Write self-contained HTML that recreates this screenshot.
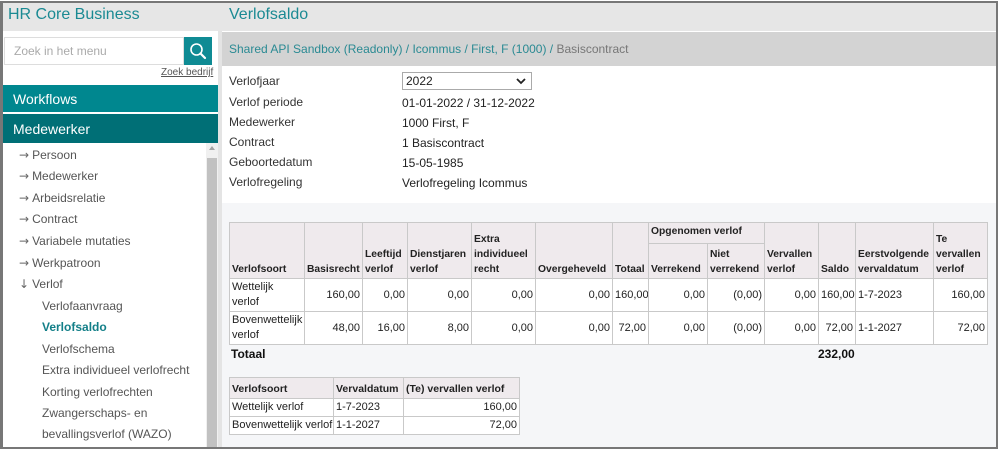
<!DOCTYPE html>
<html><head><meta charset="utf-8"><style>
*{box-sizing:border-box;margin:0;padding:0}
body{width:999px;height:451px;overflow:hidden;background:#fff;font-family:"Liberation Sans",sans-serif;font-size:12px;color:#333;position:relative}
.a{position:absolute;white-space:nowrap}
#frame{position:absolute;left:0;top:1px;width:998px;height:448px;border:2px solid #777;border-left-width:3px}
.mi{position:absolute;left:19px;color:#555;font-size:12px}
.mi span{color:#666;margin-right:3px;font-family:"DejaVu Sans",sans-serif;font-size:12px}
.si{position:absolute;left:42px;color:#555;font-size:12px}
table{border-collapse:collapse;position:absolute;font-size:11px;color:#222;background:#fff;table-layout:fixed}
td,th{border:1px solid #c9c9c9;padding:1px 2px;line-height:15px;overflow:hidden}
th{background:#efeaed;text-align:left;vertical-align:bottom;font-weight:bold;font-size:10.5px}
.t1 th{font-size:10.3px}
td.r{text-align:right;vertical-align:middle}
.nw td,.nw th{white-space:nowrap}
.lbl{position:absolute;left:229px;color:#333}
.val{position:absolute;left:402px;color:#222}
</style></head><body>
<div class="a" style="left:3px;top:3px;width:993px;height:28px;background:#e6e6e6"></div>
<div class="a" style="left:8px;top:6px;font-size:16px;color:#1b8a93">HR Core Business</div>
<div class="a" style="left:229px;top:6px;font-size:16px;color:#1b8a93">Verlofsaldo</div>
<div class="a" style="left:3px;top:31px;width:215px;height:417px;background:#fff"></div>
<div class="a" style="left:4px;top:37px;width:180px;height:28px;border:1px solid #ddd;background:#fff"></div>
<div class="a" style="left:14px;top:44px;color:#aaa;font-size:12px">Zoek in het menu</div>
<div class="a" style="left:184px;top:37px;width:28px;height:28px;background:#0f8b94"></div>
<svg class="a" style="left:188px;top:41px" width="20" height="20" viewBox="0 0 20 20"><circle cx="8.5" cy="8.5" r="5.5" fill="none" stroke="#fff" stroke-width="1.6"/><path d="M12.5 12.5 L17 17" stroke="#fff" stroke-width="2.2" stroke-linecap="round"/></svg>
<div class="a" style="left:161px;top:67px;font-size:10px;color:#555;text-decoration:underline">Zoek bedrijf</div>
<div class="a" style="left:3px;top:85px;width:216px;height:28px;background:#00878f;border-bottom:1px solid #fff"></div>
<div class="a" style="left:13px;top:91px;color:#fff;font-size:14px">Workflows</div>
<div class="a" style="left:3px;top:114px;width:216px;height:29px;background:#006f76"></div>
<div class="a" style="left:13px;top:121px;color:#fff;font-size:14px">Medewerker</div>
<div class="a" style="left:206px;top:143px;width:12px;height:305px;background:#f0f0f0"></div>
<div class="a" style="left:207px;top:158px;width:10px;height:290px;background:#c1c1c1"></div>
<div class="a" style="left:209px;top:146px;width:0;height:0;border-left:3px solid transparent;border-right:3px solid transparent;border-bottom:4px solid #a3a3a3"></div>
<div class="a" style="left:218px;top:31px;width:4px;height:417px;background:#e4e4e4"></div>
<div class="mi" style="top:148px"><span>→</span>Persoon</div>
<div class="mi" style="top:169px"><span>→</span>Medewerker</div>
<div class="mi" style="top:191px"><span>→</span>Arbeidsrelatie</div>
<div class="mi" style="top:212px"><span>→</span>Contract</div>
<div class="mi" style="top:234px"><span>→</span>Variabele mutaties</div>
<div class="mi" style="top:256px"><span>→</span>Werkpatroon</div>
<div class="mi" style="top:277px"><span>↓</span>Verlof</div>
<div class="si" style="top:299px">Verlofaanvraag</div>
<div class="si" style="top:320px;color:#137f88;font-weight:bold">Verlofsaldo</div>
<div class="si" style="top:342px">Verlofschema</div>
<div class="si" style="top:363px">Extra individueel verlofrecht</div>
<div class="si" style="top:385px">Korting verlofrechten</div>
<div class="si" style="top:406px">Zwangerschaps- en</div>
<div class="si" style="top:427px">bevallingsverlof (WAZO)</div>
<div class="a" style="left:222px;top:32px;width:774px;height:34px;background:#d3d3d3"></div>
<div class="a" style="left:229px;top:42px;color:#2a8a93;font-size:12px">Shared API Sandbox (Readonly) / Icommus / First, F (1000) / <span style="color:#777">Basiscontract</span></div>
<div class="lbl" style="top:74px">Verlofjaar</div>
<div class="a" style="left:402px;top:72px;width:130px;height:18px;border:1px solid #aaa;background:#fff"></div>
<div class="a" style="left:406px;top:74px;color:#222">2022</div>
<svg class="a" style="left:516px;top:77px" width="10" height="8" viewBox="0 0 10 8"><path d="M1 2 L5 6 L9 2" fill="none" stroke="#222" stroke-width="1.8"/></svg>
<div class="lbl" style="top:95px">Verlof periode</div><div class="val" style="top:96px">01-01-2022 / 31-12-2022</div>
<div class="lbl" style="top:115px">Medewerker</div><div class="val" style="top:116px">1000 First, F</div>
<div class="lbl" style="top:135px">Contract</div><div class="val" style="top:136px">1 Basiscontract</div>
<div class="lbl" style="top:155px">Geboortedatum</div><div class="val" style="top:156px">15-05-1985</div>
<div class="lbl" style="top:175px">Verlofregeling</div><div class="val" style="top:176px">Verlofregeling Icommus</div>
<div class="a" style="left:222px;top:203px;width:774px;height:245px;background:#f5f6f8"></div>
<table class="t1" style="left:229px;top:222px;width:759px">
<colgroup><col style="width:75px"><col style="width:58px"><col style="width:45px"><col style="width:64px"><col style="width:64px"><col style="width:77px"><col style="width:36px"><col style="width:59px"><col style="width:57px"><col style="width:54px"><col style="width:37px"><col style="width:78px"><col style="width:54px"></colgroup>
<tr style="height:21px"><th rowspan="2">Verlofsoort</th><th rowspan="2">Basisrecht</th><th rowspan="2">Leeftijd verlof</th><th rowspan="2">Dienstjaren verlof</th><th rowspan="2">Extra individueel recht</th><th rowspan="2">Overgeheveld</th><th rowspan="2">Totaal</th><th colspan="2" style="vertical-align:top">Opgenomen verlof</th><th rowspan="2">Vervallen verlof</th><th rowspan="2">Saldo</th><th rowspan="2">Eerstvolgende vervaldatum</th><th rowspan="2">Te vervallen verlof</th></tr>
<tr style="height:35px"><th>Verrekend</th><th>Niet verrekend</th></tr>
<tr style="height:32px"><td>Wettelijk verlof</td><td class="r">160,00</td><td class="r">0,00</td><td class="r">0,00</td><td class="r">0,00</td><td class="r">0,00</td><td class="r">160,00</td><td class="r">0,00</td><td class="r">(0,00)</td><td class="r">0,00</td><td class="r">160,00</td><td>1-7-2023</td><td class="r">160,00</td></tr>
<tr style="height:32px"><td>Bovenwettelijk verlof</td><td class="r">48,00</td><td class="r">16,00</td><td class="r">8,00</td><td class="r">0,00</td><td class="r">0,00</td><td class="r">72,00</td><td class="r">0,00</td><td class="r">(0,00)</td><td class="r">0,00</td><td class="r">72,00</td><td>1-1-2027</td><td class="r">72,00</td></tr>
</table>
<div class="a" style="left:231px;top:347px;font-weight:bold;color:#111">Totaal</div>
<div class="a" style="left:818px;top:347px;font-weight:bold;color:#111">232,00</div>
<table class="nw" style="left:229px;top:377px;width:290px">
<colgroup><col style="width:104px"><col style="width:70px"><col style="width:116px"></colgroup>
<tr style="height:21px"><th>Verlofsoort</th><th>Vervaldatum</th><th>(Te) vervallen verlof</th></tr>
<tr style="height:18px"><td>Wettelijk verlof</td><td>1-7-2023</td><td class="r">160,00</td></tr>
<tr style="height:18px"><td>Bovenwettelijk verlof</td><td>1-1-2027</td><td class="r">72,00</td></tr>
</table>
<div id="frame"></div>
</body></html>
